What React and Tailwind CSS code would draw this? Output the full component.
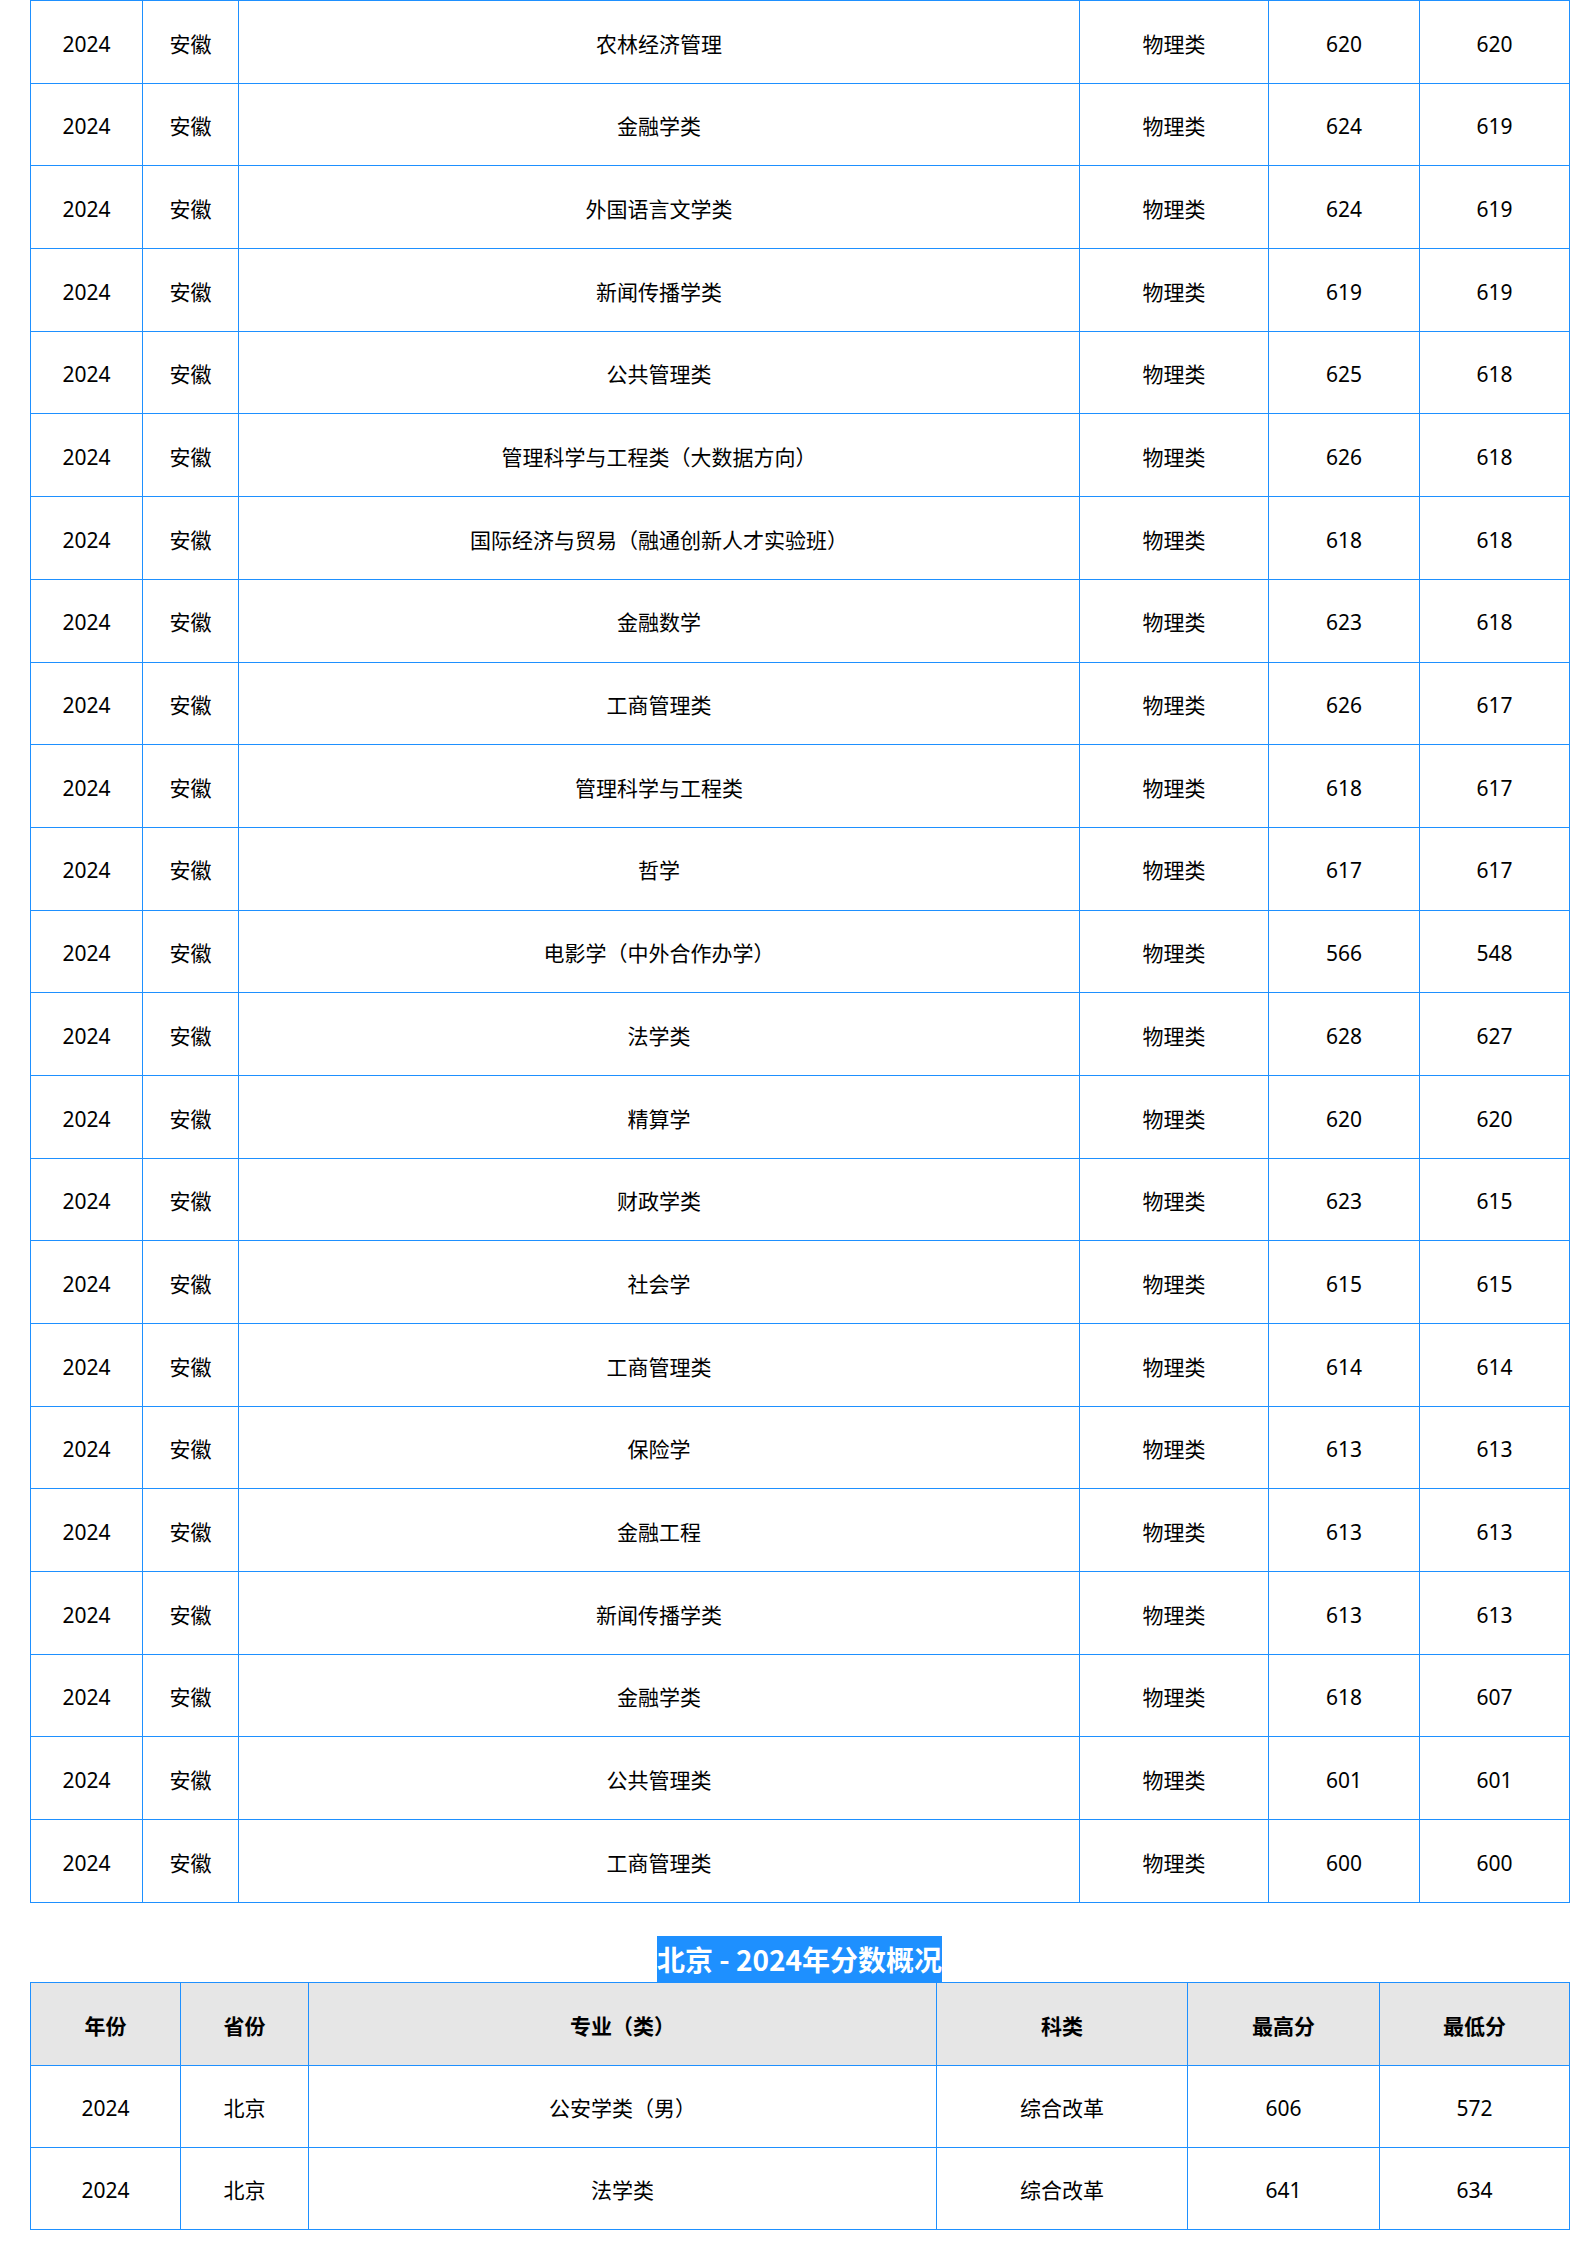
import React from "react";

const rows1 = [
  ["农林经济管理", "620", "620"],
  ["金融学类", "624", "619"],
  ["外国语言文学类", "624", "619"],
  ["新闻传播学类", "619", "619"],
  ["公共管理类", "625", "618"],
  ["管理科学与工程类（大数据方向）", "626", "618"],
  ["国际经济与贸易（融通创新人才实验班）", "618", "618"],
  ["金融数学", "623", "618"],
  ["工商管理类", "626", "617"],
  ["管理科学与工程类", "618", "617"],
  ["哲学", "617", "617"],
  ["电影学（中外合作办学）", "566", "548"],
  ["法学类", "628", "627"],
  ["精算学", "620", "620"],
  ["财政学类", "623", "615"],
  ["社会学", "615", "615"],
  ["工商管理类", "614", "614"],
  ["保险学", "613", "613"],
  ["金融工程", "613", "613"],
  ["新闻传播学类", "613", "613"],
  ["金融学类", "618", "607"],
  ["公共管理类", "601", "601"],
  ["工商管理类", "600", "600"],
];

const rows2 = [
  ["2024", "北京", "公安学类（男）", "综合改革", "606", "572"],
  ["2024", "北京", "法学类", "综合改革", "641", "634"],
];

const td = "border-[1.5px] border-solid border-[#1e90ff] text-center align-middle px-0 pt-[5px] pb-0";

export default function App() {
  return (
    <div className="w-[1587px] min-h-[2245px] bg-white pl-[30px] font-['Noto_Sans','Noto_Sans_CJK_SC',sans-serif] text-[21px] text-black">
      <table className="w-[1539px] table-fixed border-collapse">
        <colgroup>
          <col className="w-[112px]" />
          <col className="w-[96px]" />
          <col className="w-[841px]" />
          <col className="w-[189px]" />
          <col className="w-[151px]" />
          <col className="w-[150px]" />
        </colgroup>
        <tbody>
          {rows1.map((r, i) => (
            <tr key={i} className="h-[82.7px]">
              <td className={td}>2024</td>
              <td className={td}>安徽</td>
              <td className={td}>{r[0]}</td>
              <td className={td}>物理类</td>
              <td className={td}>{r[1]}</td>
              <td className={td}>{r[2]}</td>
            </tr>
          ))}
        </tbody>
      </table>

      <div className="w-[1539px] pt-[33px] flex justify-center">
        <span className="inline-block h-[46px] leading-[46px] bg-[#1e90ff] text-white font-bold text-[28px] font-['Noto_Sans_CJK_SC',sans-serif] whitespace-nowrap">
          北京&nbsp;-&nbsp;2024年分数概况
        </span>
      </div>

      <table className="w-[1539px] table-fixed border-collapse">
        <colgroup>
          <col className="w-[150px]" />
          <col className="w-[128px]" />
          <col className="w-[628px]" />
          <col className="w-[251px]" />
          <col className="w-[192px]" />
          <col className="w-[190px]" />
        </colgroup>
        <thead>
          <tr className="h-[83px] bg-[#e6e6e6]">
            {["年份", "省份", "专业（类）", "科类", "最高分", "最低分"].map((h) => (
              <th key={h} className={td + " font-bold"}>
                {h}
              </th>
            ))}
          </tr>
        </thead>
        <tbody>
          {rows2.map((r, i) => (
            <tr key={i} className="h-[82px]">
              {r.map((c, j) => (
                <td key={j} className={td}>
                  {c}
                </td>
              ))}
            </tr>
          ))}
        </tbody>
      </table>
    </div>
  );
}
